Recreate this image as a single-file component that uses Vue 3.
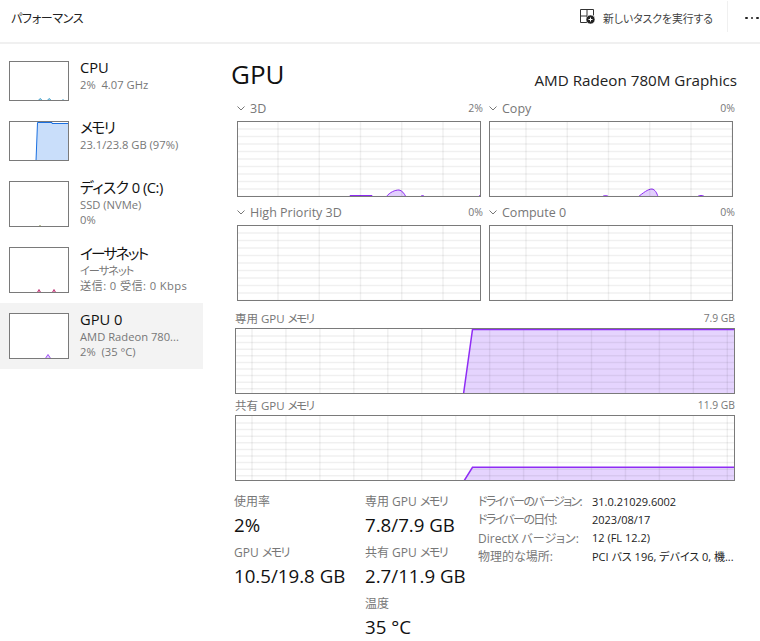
<script setup>
const sideItems = [
  { name: 'CPU', lines: ['2%  4.07 GHz'], h: 40, color: '#3a9cc8', fill: '#cfe6f3', ls: 0,
    area: ['29,40 31,37.5 34,40', '38,40 40,37.5 43,40', '53,40 54,38.5 55,40'] },
  { name: 'メモリ', lines: ['23.1/23.8 GB (97%)'], h: 40, color: '#1a6fe0', fill: '#c9defa', ls: -1.5,
    area: ['27,40 28.5,1.5 43,1.5 43,2.5 60,2.5 60,40'] },
  { name: 'ディスク 0 (C:)', lines: ['SSD (NVMe)', '0%'], h: 46, color: '#6b7a1f', fill: '#e6ebc8', ls: -0.5,
    area: ['30,46 31,44.5 32,46'] },
  { name: 'イーサネット', lines: ['イーサネット', '送信: 0 受信: 0 Kbps'], h: 46, color: '#c03a78', fill: '#e9a7c5', ls: -1.8,
    area: ['28,46 30,42.5 32,46', '43,46 45,42.5 47,46'] },
  { name: 'GPU 0', lines: ['AMD Radeon 780...', '2%  (35 °C)'], h: 46, color: '#a050f5', fill: '#e2cffd', active: true, ls: 0,
    area: ['36,46 39,41.5 42,46', '45,46 45.5,45 46,46'] }
]

const engines = [
  { name: '3D', value: '2%', phase: 41,
    bumps: ['M113,76 L113,74.5 L135,74.5 L135,76', 'M149,76 C153,71 158,69 162,69 C165,69.5 167,72 169,76', 'M183,76 C185,74 186,74 188,76', 'M241,76 L243,74.5 L244,76'] },
  { name: 'Copy', value: '0%', phase: 37,
    bumps: ['M113,76 C115,74 118,74 120,76', 'M149,76 C154,72 159,68 163,68 C166,68.5 168,72 169,76', 'M208,76 C210,74 214,74 216,76'] },
  { name: 'High Priority 3D', value: '0%', phase: 41, bumps: [] },
  { name: 'Compute 0', value: '0%', phase: 37, bumps: [] }
]

function lines(start, step, end) {
  const out = []
  for (let p = start; p < end; p += step) out.push(p)
  return out
}

const memGraphs = [
  { name: '専用 GPU ', max: '7.9 GB', top: 1.5, from: 228.5, to: 237.5 },
  { name: '共有 GPU ', max: '11.9 GB', top: 52.3, from: 229, to: 237.5 }
]

const stats = [
  [
    { label: '使用率', value: '2%' },
    { label: 'GPU ', kana: 'メモリ', value: '10.5/19.8 GB' }
  ],
  [
    { label: '専用 GPU ', kana: 'メモリ', value: '7.8/7.9 GB' },
    { label: '共有 GPU ', kana: 'メモリ', value: '2.7/11.9 GB' },
    { label: '温度', value: '35 °C' }
  ]
]

const details = [
  { label: 'ドライバーのバージョン:', value: '31.0.21029.6002', tight: true },
  { label: 'ドライバーの日付:', value: '2023/08/17', tight: true },
  { label: 'DirectX バージョン:', value: '12 (FL 12.2)' },
  { label: '物理的な場所:', value: 'PCI バス 196, デバイス 0, 機...' }
]
</script>

<template>
  <div class="app">
    <header class="topbar">
      <div class="page-title">パフォーマンス</div>
      <div class="actions">
        <button class="run-task">
          <svg class="run-icon" width="15" height="15" viewBox="0 0 15 15" fill="none" stroke="#333" stroke-width="1">
            <path d="M.5.5h6.5v6.5h-6.5zM7 .5h6.5v6M.5 7v6.5h6.5v-6.5" />
            <circle cx="10.5" cy="10.5" r="4.5" fill="#222" stroke="#fff" stroke-width=".6" />
            <path d="M10.5 8.5v4M8.5 10.5h4" stroke="#fff" />
          </svg>
          <span>新しいタスクを実行する</span>
        </button>
        <div class="sep"></div>
        <div class="more"><i></i><i></i><i></i></div>
      </div>
    </header>
    <div class="body">
      <aside class="side">
        <div v-for="item in sideItems" :key="item.name" class="side-item" :class="{ active: item.active }">
          <svg class="thumb" width="60" :height="item.h" :viewBox="`0 0 60 ${item.h}`">
            <polygon
              v-for="(p, i) in item.area"
              :key="i"
              :points="p"
              :fill="item.fill"
              :stroke="item.color"
              stroke-width="1"
            />
            <rect x="0.5" y="0.5" width="59" :height="item.h - 1" fill="none" stroke="#7a7a7a" />
          </svg>
          <div class="side-text">
            <div class="side-name" :style="{ letterSpacing: item.ls + 'px' }">{{ item.name }}</div>
            <div v-for="l in item.lines" :key="l" class="side-sub">{{ l }}</div>
          </div>
        </div>
      </aside>
      <main class="main">
        <div class="head">
          <h1>GPU</h1>
          <div class="adapter">AMD Radeon 780M Graphics</div>
        </div>
        <div class="engines">
          <div v-for="e in engines" :key="e.name" class="engine">
            <div class="graph-label">
              <span class="eng-name">
                <svg width="8" height="5" viewBox="0 0 8 5" fill="none" stroke="#777"><path d="M0.5 0.5 4 4 7.5 0.5" /></svg>
                {{ e.name }}
              </span>
              <span class="eng-value">{{ e.value }}</span>
            </div>
            <svg class="graph" width="244" height="76" viewBox="0 0 244 76">
              <path v-for="(b, i) in e.bumps" :key="i" :d="b" class="plot" />
              <line v-for="x in lines(e.phase, 41.25, 244)" :key="'v' + x" :x1="x" :x2="x" y1="0" y2="76" class="grid" />
              <line v-for="y in lines(8, 7.5, 76)" :key="'h' + y" x1="0" x2="244" :y1="y" :y2="y" class="grid" />
              <rect x="0.5" y="0.5" width="243" height="75" class="frame" />
            </svg>
          </div>
        </div>
        <div v-for="m in memGraphs" :key="m.name" class="mem">
          <div class="graph-label mem-label">
            <span class="small">{{ m.name }}<span class="kana">メモリ</span></span>
            <span class="mem-max">{{ m.max }}</span>
          </div>
          <svg class="graph" width="500" height="66" viewBox="0 0 500 66">
            <path :d="`M${m.from},66 L${m.to},${m.top} L500,${m.top} L500,66 Z`" class="mem-fill" />
            <line v-for="x in lines(17, 33.95, 500)" :key="'v' + x" :x1="x" :x2="x" y1="0" y2="66" class="grid" />
            <line v-for="y in lines(8, 6.6, 66)" :key="'h' + y" x1="0" x2="500" :y1="y" :y2="y" class="grid" />
            <path :d="`M${m.from},66 L${m.to},${m.top} L500,${m.top}`" class="mem-line" />
            <rect x="0.5" y="0.5" width="499" height="65" class="frame" />
          </svg>
        </div>
        <div class="stats">
          <div v-for="(col, i) in stats" :key="i" class="stat-col">
            <div v-for="s in col" :key="s.value" class="stat">
              <div class="stat-label">{{ s.label }}<span v-if="s.kana" class="kana">{{ s.kana }}</span></div>
              <div class="stat-value">{{ s.value }}</div>
            </div>
          </div>
          <div class="details">
            <template v-for="d in details" :key="d.label">
              <div class="d-label" :class="{ tight: d.tight }">{{ d.label }}</div>
              <div class="d-value">{{ d.value }}</div>
            </template>
          </div>
        </div>
      </main>
    </div>
  </div>
</template>

<style>
html,
body {
  margin: 0;
  background: #fff;
  overflow: hidden;
}
</style>

<style scoped>
.app {
  width: 760px;
  height: 641px;
  overflow: hidden;
  background: #fff;
  color: #1a1a1a;
  font-family: 'Open Sans', 'Noto Sans CJK JP', sans-serif;
  font-feature-settings: 'palt';
}
.topbar {
  height: 36px;
  padding: 0 0 6px 11px;
  border-bottom: 2px solid #f0f0f0;
  display: flex;
  align-items: center;
  justify-content: space-between;
}
.page-title {
  font-size: 12px;
  letter-spacing: -0.3px;
  color: #222;
}
.actions {
  display: flex;
  align-items: center;
  height: 100%;
}
.run-task {
  display: flex;
  align-items: center;
  gap: 8px;
  border: 0;
  background: none;
  padding: 0;
  font: inherit;
  font-feature-settings: 'palt';
  font-size: 10.8px;
  color: #444;
}
.run-icon {
  margin-top: -3px;
}
.sep {
  width: 1px;
  height: 31px;
  background: #f0f0f0;
  align-self: flex-start;
  margin: 1px 17px 0 14px;
}
.more {
  display: flex;
  gap: 3px;
  width: 15px;
}
.more i {
  flex: none;
  width: 2.5px;
  height: 2.5px;
  background: #222;
  border-radius: 50%;
}
.body {
  display: flex;
}
.side {
  width: 203px;
  padding-top: 7px;
  flex-shrink: 0;
}
.side-item {
  display: flex;
  gap: 11px;
  padding: 10px 0 10px 9px;
  align-items: flex-start;
}
.side-item.active {
  background: #f3f3f3;
}
.side-item:nth-child(4) .side-sub:nth-child(2) {
  letter-spacing: -1px;
}
.side-item:nth-child(4) .side-sub:nth-child(3) {
  letter-spacing: 0.4px;
}
.thumb {
  display: block;
  flex-shrink: 0;
  background: #fff;
}
.side-text {
  margin-top: -4px;
}
.side-name {
  font-size: 14.7px;
  line-height: 20px;
  color: #111;
}
.side-sub {
  font-size: 11.2px;
  line-height: 15px;
  color: #777;
  white-space: pre;
}
.main {
  flex: 1;
  padding: 10px 25px 0 28px;
  min-width: 0;
}
.head {
  display: flex;
  justify-content: space-between;
  align-items: center;
  height: 40px;
}
h1 {
  margin: 0;
  font-size: 26px;
  font-weight: 400;
  color: #111;
}
.adapter {
  font-size: 15.2px;
  color: #222;
  margin-top: 12px;
  margin-right: -2px;
}
.engines {
  display: grid;
  grid-template-columns: 244px 244px;
  column-gap: 8px;
  row-gap: 8px;
  margin: 7px 0 6px 6px;
}
.graph-label {
  display: flex;
  justify-content: space-between;
  align-items: center;
  box-sizing: border-box;
  height: 20px;
  padding-bottom: 6px;
  color: #777;
}
.eng-name {
  font-size: 12.5px;
  display: flex;
  align-items: center;
  gap: 5px;
}
.eng-value {
  font-size: 10.5px;
  color: #777;
  margin-right: -2px;
}
.small {
  font-size: 11.5px;
  color: #777;
}
.mem-max {
  font-size: 10.3px;
  color: #777;
}
.kana {
  letter-spacing: -1.5px;
}
.graph {
  display: block;
}
.grid {
  stroke: rgba(0, 0, 0, 0.06);
  stroke-width: 1.5;
}
.frame {
  fill: none;
  stroke: #7a7a7a;
}
.plot {
  fill: #e2cffd;
  stroke: #8f2cf5;
}
.mem {
  margin-left: 4px;
}
.mem-label {
  height: 21px;
  padding-bottom: 0;
}
.mem-fill {
  fill: #e5d4fe;
}
.mem-line {
  fill: none;
  stroke: #8f2cf5;
  stroke-width: 1.5;
}
.stats {
  display: flex;
  margin: 11px 0 0 3px;
}
.stat-col {
  flex: none;
  width: 131px;
}
.stat-col + .stat-col {
  width: 113px;
}
.stat {
  height: 51px;
}
.stat-label {
  font-size: 12px;
  line-height: 20px;
  color: #777;
}
.stat-value {
  font-size: 18.7px;
  line-height: 26px;
  color: #111;
}
.details {
  flex: none;
  display: grid;
  grid-template-columns: 114px 140px;
  grid-auto-rows: 18.3px;
  align-items: center;
  font-size: 11px;
  height: 74px;
}
.d-label {
  color: #777;
  font-size: 12px;
  white-space: nowrap;
}
.d-label.tight {
  letter-spacing: -1.6px;
}
.d-value {
  color: #222;
  white-space: nowrap;
}
</style>
